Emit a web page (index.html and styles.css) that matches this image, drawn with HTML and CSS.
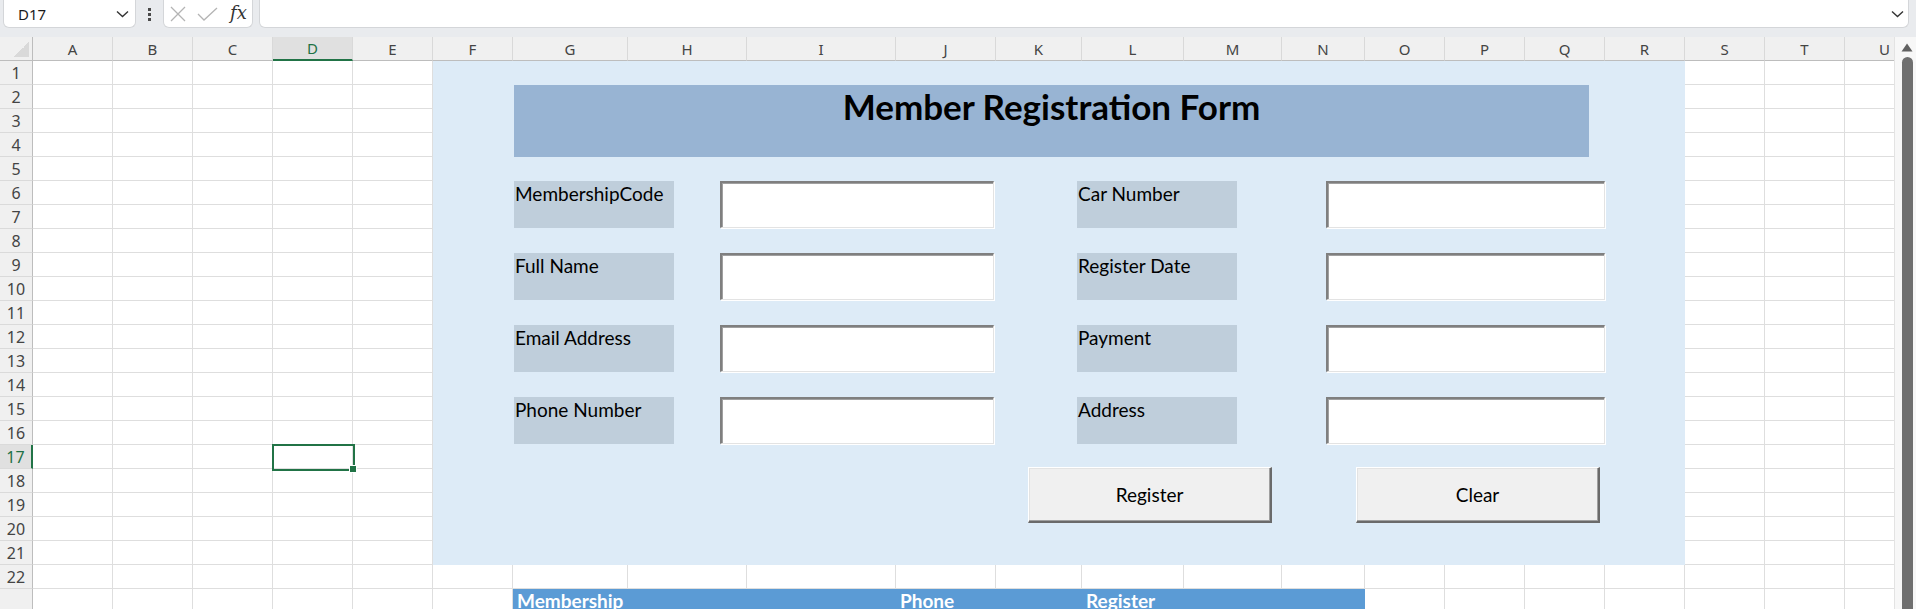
FILE: index.html
```html
<!DOCTYPE html>
<html lang="en">
<head>
<meta charset="utf-8">
<title>Member Registration Form - Excel</title>
<link rel="stylesheet" href="styles.css">
</head>
<body>
<div class="app">
  <header class="fbar">
    <div class="namebox">
      <span>D17</span>
      <svg class="chev" width="13" height="8" viewBox="0 0 13 8"><path d="M1 1.5 L6.5 6.5 L12 1.5" fill="none" stroke="#333" stroke-width="1.4"/></svg>
    </div>
    <div class="kebab"><i></i><i></i><i></i></div>
    <div class="fxbox">
      <svg width="16" height="16" viewBox="0 0 16 16"><path d="M1 1 L15 15 M15 1 L1 15" stroke="#b4b4b4" stroke-width="1.3" fill="none"/></svg>
      <svg width="21" height="14" viewBox="0 0 21 14"><path d="M1 7 L7 13 L20 1" stroke="#b4b4b4" stroke-width="1.3" fill="none"/></svg>
      <span class="fx">fx</span>
    </div>
    <div class="formula">
      <svg class="chev" width="13" height="8" viewBox="0 0 13 8"><path d="M1 1.5 L6.5 6.5 L12 1.5" fill="none" stroke="#333" stroke-width="1.4"/></svg>
    </div>
  </header>
  <div class="main">
    <div class="sheet">
      <div class="corner"></div>
      <div class="ch">A</div><div class="ch">B</div><div class="ch">C</div><div class="ch active">D</div><div class="ch">E</div><div class="ch">F</div><div class="ch">G</div><div class="ch">H</div><div class="ch">I</div><div class="ch">J</div><div class="ch">K</div><div class="ch">L</div><div class="ch">M</div><div class="ch">N</div><div class="ch">O</div><div class="ch">P</div><div class="ch">Q</div><div class="ch">R</div><div class="ch">S</div><div class="ch">T</div><div class="ch">U</div>

      <div class="rh">1</div><div class="rh">2</div><div class="rh">3</div><div class="rh">4</div><div class="rh">5</div><div class="rh">6</div><div class="rh">7</div><div class="rh">8</div><div class="rh">9</div><div class="rh">10</div><div class="rh">11</div><div class="rh">12</div><div class="rh">13</div><div class="rh">14</div><div class="rh">15</div><div class="rh">16</div><div class="rh active">17</div><div class="rh">18</div><div class="rh">19</div><div class="rh">20</div><div class="rh">21</div><div class="rh">22</div><div class="rh"></div>

      <div class="gridlines">
        <i></i><i></i><i></i><i></i><i></i><i></i><i></i><i></i><i></i><i></i><i></i><i></i><i></i><i></i><i></i><i></i><i></i><i></i><i></i><i></i><i></i>
      </div>

      <section class="panel">
        <div class="title">Member Registration Form</div>
        <div class="fields">
          <div class="label">MembershipCode</div>
          <div class="input"></div>
          <div class="label">Car Number</div>
          <div class="input wide"></div>

          <div class="label">Full Name</div>
          <div class="input"></div>
          <div class="label">Register Date</div>
          <div class="input wide"></div>

          <div class="label">Email Address</div>
          <div class="input"></div>
          <div class="label">Payment</div>
          <div class="input wide"></div>

          <div class="label">Phone Number</div>
          <div class="input"></div>
          <div class="label">Address</div>
          <div class="input wide"></div>
        </div>
        <div class="actions">
          <div class="btn">Register</div>
          <div class="btn">Clear</div>
        </div>
      </section>

      <div class="sel"></div>

      <div class="tbl-head">
        <span>Membership</span>
        <span>Phone</span>
        <span>Register</span>
      </div>
    </div>
    <div class="vscroll">
      <svg width="12" height="9" viewBox="0 0 12 9"><path d="M6 0.5 L11.5 8.5 L0.5 8.5 Z" fill="#616161"/></svg>
      <div class="thumb"></div>
    </div>
  </div>
</div>
</body>
</html>
```
FILE: styles.css
```css
* { box-sizing: border-box; }

body {
  margin: 0;
  background: #fff;
}

.app {
  width: 1916px;
  height: 609px;
  overflow: hidden;
  font-family: "Noto Sans", "Open Sans", sans-serif;
  color: #222;
}

/* ---------- formula bar ---------- */
.fbar {
  height: 37px;
  background: #e9ebee;
  display: flex;
  align-items: flex-start;
  padding-left: 3px;
}

.namebox {
  width: 133px;
  height: 28px;
  background: #fff;
  border: 1px solid #d4d6d9;
  border-top: 0;
  border-radius: 0 0 6px 6px;
  display: flex;
  align-items: center;
  justify-content: space-between;
  padding: 0 6px 0 14px;
  font-size: 15px;
  color: #1b1b1b;
}

.kebab {
  width: 27px;
  height: 28px;
  display: flex;
  flex-direction: column;
  align-items: center;
  justify-content: center;
  gap: 2px;
}
.kebab i {
  width: 3px;
  height: 3px;
  background: #4a4a4a;
}

.fxbox {
  width: 90px;
  height: 28px;
  background: #fff;
  border: 1px solid #d4d6d9;
  border-top: 0;
  border-radius: 0 0 6px 6px;
  display: flex;
  align-items: center;
  padding-left: 6px;
  gap: 11px;
}
.fx {
  font-family: "DejaVu Serif", "Liberation Serif", serif;
  font-style: italic;
  font-size: 18px;
  color: #333;
  margin-left: 1px;
  margin-top: -2px;
}

.formula {
  width: 1650px;
  height: 28px;
  margin-left: 6px;
  background: #fff;
  border: 1px solid #d4d6d9;
  border-top: 0;
  border-radius: 0 0 6px 6px;
  display: flex;
  align-items: center;
  justify-content: flex-end;
  padding-right: 4px;
}

/* ---------- sheet ---------- */
.main {
  display: flex;
  height: 572px;
}

.sheet {
  --cols: 80px 80px 80px 80px 80px 80px 115px 119px 149px 100px 86px 102px 98px 83px 80px 80px 80px 80px 80px 80px 80px;
  width: 1894px;
  flex: none;
  overflow: hidden;
  display: grid;
  grid-template-columns: 33px var(--cols);
  grid-template-rows: repeat(23, 24px) 48px;
}

.corner {
  background:
    linear-gradient(135deg, transparent 50%, #d9d9d9 50%) no-repeat right 3px bottom 3px / 15px 15px,
    #f0f0f0;
  border-right: 1px solid #bdbdbd;
  border-bottom: 1px solid #bdbdbd;
}

.ch {
  background: #f0f0f0;
  border-right: 1px solid #d9d9d9;
  border-bottom: 1px solid #bdbdbd;
  display: flex;
  align-items: center;
  justify-content: center;
  font-size: 15px;
  color: #444;
}
.ch.active {
  background: #e0e0e0;
  color: #1e7145;
  border-bottom: 2px solid #217346;
}

.rh {
  grid-column: 1;
  background: #f0f0f0;
  border-right: 1px solid #bdbdbd;
  border-bottom: 1px solid #dadada;
  display: flex;
  align-items: center;
  justify-content: center;
  font-size: 16px;
  color: #444;
}
.rh.active {
  background: #e0e0e0;
  color: #1e7145;
  border-right: 2px solid #217346;
}

.gridlines {
  grid-column: 2 / -1;
  grid-row: 2 / -1;
  display: grid;
  grid-template-columns: var(--cols);
}
.gridlines i {
  border-right: 1px solid #dedede;
  background: repeating-linear-gradient(to bottom, transparent 0 23px, #dedede 23px 24px);
}

/* ---------- form panel ---------- */
.panel {
  grid-column: 7 / 20;
  grid-row: 2 / 23;
  background: #ddebf7;
  padding: 24px 0 0 81px;
  font-family: Lato, "Noto Sans", sans-serif;
  color: #000;
}

.title {
  width: 1075px;
  height: 72px;
  background: #98b4d3;
  text-align: center;
  font-weight: 700;
  font-size: 35px;
  line-height: 1.2;
  padding-top: 0;
}

.fields {
  margin-top: 24px;
  display: grid;
  grid-template-columns: 206px 357px 249px 279px;
  grid-auto-rows: 47px;
  row-gap: 25px;
}

.label {
  width: 160px;
  background: #bfcedb;
  font-size: 19px;
  line-height: 1.2;
  padding: 2px 0 0 1px;
}

.input {
  width: 274px;
  background: #fff;
  border-style: solid;
  border-width: 2px 1px 1px 2px;
  border-color: #7f7f7f #e3e3e3 #e3e3e3 #7f7f7f;
  box-shadow: 1px 1px 0 #fff, inset 1px 1px 0 #a0a0a0;
}
.input.wide {
  width: 279px;
}

.actions {
  margin-top: 23px;
  padding-left: 514px;
  display: flex;
  gap: 84px;
}

.btn {
  width: 244px;
  height: 56px;
  background: #f0f0f0;
  border-style: solid;
  border-width: 1px 2px 2px 1px;
  border-color: #ffffff #6a6a6a #6a6a6a #ffffff;
  box-shadow: inset -1px -1px 0 #a0a0a0, inset 1px 1px 0 #e3e3e3;
  display: flex;
  align-items: center;
  justify-content: center;
  font-size: 19px;
}

/* ---------- selection ---------- */
.sel {
  grid-column: 5;
  grid-row: 18;
  margin: -1px -2px -2px -1px;
  border: 2px solid #217346;
  position: relative;
}
.sel::after {
  content: "";
  position: absolute;
  right: -4px;
  bottom: -4px;
  width: 6px;
  height: 6px;
  background: #217346;
  border: 1px solid #fff;
}

/* ---------- table header ---------- */
.tbl-head {
  grid-column: 8 / 16;
  grid-row: 24;
  background: #5b9bd5;
  display: grid;
  grid-template-columns: 383px 186px 1fr;
  align-items: start;
  font-family: Lato, "Noto Sans", sans-serif;
  font-weight: 700;
  font-size: 19px;
  line-height: 1.2;
  color: #fff;
  padding-top: 1px;
}
.tbl-head span {
  padding-left: 4px;
}

/* ---------- scrollbar ---------- */
.vscroll {
  width: 22px;
  flex: none;
  background: #f7f7f7;
  border-left: 1px solid #e3e3e3;
  display: flex;
  flex-direction: column;
  align-items: flex-end;
  padding: 6px 3px 0 0;
}
.thumb {
  width: 11px;
  flex: 1;
  margin-top: 5px;
  background: #6f6f6f;
  border-radius: 6px 6px 0 0;
}
```
